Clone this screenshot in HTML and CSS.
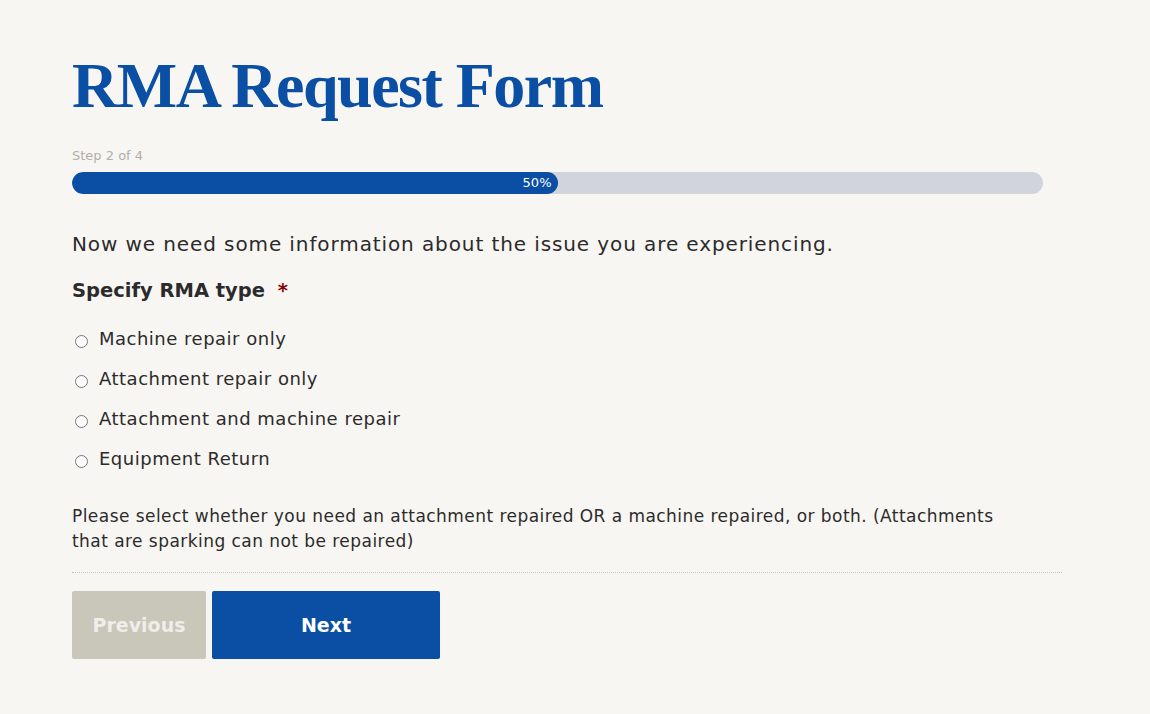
FILE: index.html
```html
<!DOCTYPE html>
<html lang="en">
<head>
  <meta charset="UTF-8" />
  <title>RMA Request Form</title>
  <link rel="stylesheet" href="styles.css">
</head>
<body>
  <div class="form-wrap">
    <h1 class="title">RMA Request Form</h1>

    <div class="progress">
      <div class="step">Step 2 of 4</div>
      <div class="bar">
        <div class="fill" style="width: 50%;">50%</div>
      </div>
    </div>

    <p class="intro">Now we need some information about the issue you are experiencing.</p>

    <div class="field" role="radiogroup">
      <div class="label">Specify RMA type <span class="req">*</span></div>
      <div class="choices">
        <label class="choice"><input type="radio" name="rma" /> Machine repair only</label>
        <label class="choice"><input type="radio" name="rma" /> Attachment repair only</label>
        <label class="choice"><input type="radio" name="rma" /> Attachment and machine repair</label>
        <label class="choice"><input type="radio" name="rma" /> Equipment Return</label>
      </div>
      <p class="desc">Please select whether you need an attachment repaired OR a machine repaired, or both. (Attachments that are sparking can not be repaired)</p>
    </div>

    <div class="footer">
      <button class="btn prev" disabled>Previous</button>
      <button class="btn next">Next</button>
    </div>
  </div>
</body>
</html>
```

FILE: styles.css
```css
* {
  box-sizing: border-box;
}

body {
  margin: 0;
  background: #f8f6f2;
  font-family: 'DejaVu Sans', 'Noto Sans', sans-serif;
  color: #2b2b2b;
}

.form-wrap {
  width: 990px;
  margin-left: 72px;
  padding-top: 46px;
}

.title {
  margin: 0;
  font-family: 'Liberation Serif', 'DejaVu Serif', serif;
  font-weight: bold;
  font-size: 64px;
  line-height: 80px;
  letter-spacing: -1.5px;
  color: #0a4fa4;
}

.progress {
  margin-top: 21px;
  width: 971px;
}

.step {
  font-size: 13px;
  line-height: 18px;
  color: #b0afac;
  margin-bottom: 7px;
}

.bar {
  height: 22px;
  border-radius: 11px;
  background: #d1d4dc;
  overflow: hidden;
}

.fill {
  height: 100%;
  background: #0a4fa4;
  border-radius: 11px;
  color: #fff;
  font-size: 13px;
  line-height: 22px;
  text-align: right;
  padding-right: 6px;
}

.intro {
  margin: 36px 0 0;
  font-size: 20px;
  line-height: 28px;
  letter-spacing: 0.9px;
}

.label {
  margin-top: 19px;
  font-size: 19.5px;
  line-height: 28px;
  font-weight: bold;
}

.req {
  color: #8b0000;
  margin-left: 6px;
}

.choices {
  margin-top: 14px;
}

.choice {
  display: flex;
  align-items: center;
  gap: 11px;
  font-size: 18px;
  letter-spacing: 0.5px;
  line-height: 40px;
  height: 40px;
}

.choice input {
  margin: 4px 0 0 3px;
  width: 13px;
  height: 13px;
}

.desc {
  margin: 25px 0 0;
  max-width: 940px;
  font-size: 17px;
  letter-spacing: 0.45px;
  line-height: 25px;
}

.footer {
  margin-top: 18px;
  padding-top: 18px;
  border-top: 1px dotted #c8c6c0;
  display: flex;
  gap: 6px;
}

.btn {
  height: 68px;
  border: none;
  border-radius: 2px;
  font-family: 'DejaVu Sans', sans-serif;
  font-weight: bold;
  font-size: 19px;
  color: #fff;
  cursor: pointer;
}

.prev {
  width: 134px;
  background: #c9c6ba;
  color: #efeeea;
}

.next {
  width: 228px;
  background: #0a4fa4;
}
```
